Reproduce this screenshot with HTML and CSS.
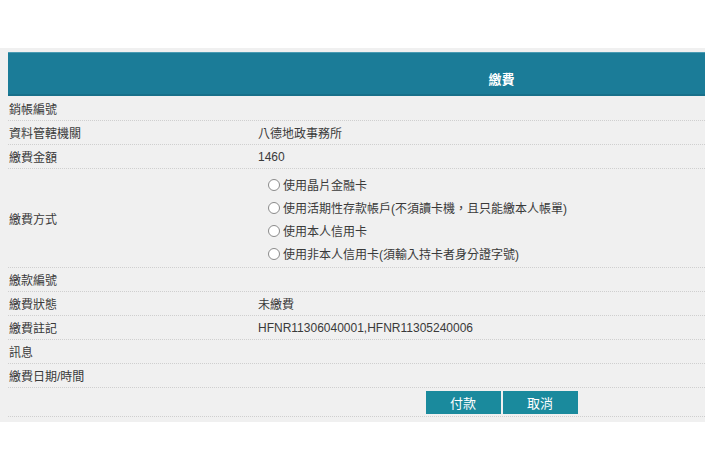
FILE: index.html
```html
<!DOCTYPE html>
<html lang="zh-Hant">
<head>
  <meta charset="UTF-8">
  <meta name="viewport" content="width=device-width, initial-scale=1.0">
  <title>繳費</title>
  <link rel="stylesheet" href="styles.css">
</head>
<body>
  <div class="panel">
    <div class="sheet">
      <div class="head">
        <div></div>
        <div class="title">繳費</div>
      </div>

      <div class="row">
        <div class="label">銷帳編號</div>
        <div class="value"></div>
      </div>
      <div class="row">
        <div class="label">資料管轄機關</div>
        <div class="value">八德地政事務所</div>
      </div>
      <div class="row">
        <div class="label">繳費金額</div>
        <div class="value">1460</div>
      </div>
      <div class="row row-pay">
        <div class="label">繳費方式</div>
        <div class="value options">
          <label class="opt"><input type="radio" name="payType">使用晶片金融卡</label>
          <label class="opt"><input type="radio" name="payType">使用活期性存款帳戶(不須讀卡機，且只能繳本人帳單)</label>
          <label class="opt"><input type="radio" name="payType">使用本人信用卡</label>
          <label class="opt"><input type="radio" name="payType">使用非本人信用卡(須輸入持卡者身分證字號)</label>
        </div>
      </div>
      <div class="row">
        <div class="label">繳款編號</div>
        <div class="value"></div>
      </div>
      <div class="row">
        <div class="label">繳費狀態</div>
        <div class="value">未繳費</div>
      </div>
      <div class="row">
        <div class="label">繳費註記</div>
        <div class="value">HFNR11306040001,HFNR11305240006</div>
      </div>
      <div class="row">
        <div class="label">訊息</div>
        <div class="value"></div>
      </div>
      <div class="row">
        <div class="label">繳費日期/時間</div>
        <div class="value"></div>
      </div>

      <div class="row row-actions">
        <div></div>
        <div class="actions">
          <button type="button" class="btn">付款</button>
          <button type="button" class="btn">取消</button>
        </div>
      </div>
    </div>
  </div>
</body>
</html>
```

FILE: styles.css
```css
body {
  margin: 0;
  padding-top: 48px;
  background-color: #fff;
  font-family: 'Liberation Sans', 'Noto Sans CJK TC', sans-serif;
  font-size: 12px;
  color: #3a3a3a;
}

.panel {
  background-color: #f0f0f0;
  padding: 4px 0 5px 8px;
  overflow: hidden;
}

.sheet {
  width: 737px;
}

.head {
  display: grid;
  grid-template-columns: 250px 1fr;
  height: 44px;
  background-color: #1b7c98;
  border-top: 1px solid #4a9bb3;
  border-bottom: 2px solid #18708a;
  box-sizing: border-box;
}

.title {
  color: #fff;
  font-weight: bold;
  font-size: 13px;
  text-align: center;
  padding-top: 16px;
}

.row {
  display: grid;
  grid-template-columns: 250px 1fr;
  align-items: center;
  min-height: 23px;
  border-bottom: 1px dotted #cfcfcf;
}

.row:nth-child(2) {
  min-height: 24px;
}

.label {
  padding-left: 1px;
}

.row-pay {
  min-height: 98px;
}

.options {
  display: flex;
  flex-direction: column;
  padding: 4px 0 2px 10px;
}

.opt {
  display: flex;
  align-items: center;
  height: 23px;
}

.opt input {
  appearance: none;
  width: 12px;
  height: 12px;
  margin: 0 3px 0 0;
  border: 1px solid #8a8a8a;
  border-radius: 50%;
  background-color: #fff;
}

.row-actions {
  min-height: 28px;
  align-items: start;
}

.actions {
  display: flex;
  justify-content: center;
  gap: 2px;
  padding-top: 3px;
}

.btn {
  width: 75px;
  height: 23px;
  border: none;
  background-color: #1a8a9d;
  color: #fff;
  font-family: inherit;
  font-size: 13px;
  padding: 0;
}
```
